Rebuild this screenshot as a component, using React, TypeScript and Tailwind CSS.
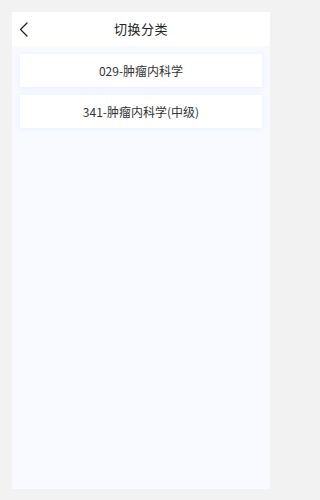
const items = ['029-肿瘤内科学', '341-肿瘤内科学(中级)'];

export default function App() {
  return (
    <div
      className="w-full min-h-screen bg-[#f2f2f2] pt-[12px] pl-[12px] pr-[11px] pb-[11px]"
      style={{ fontFamily: '"Noto Sans CJK SC", "Noto Sans", sans-serif' }}
    >
      <div className="flex flex-col h-[477px] w-[258px] bg-[#f8faff]">
        {/* Header */}
        <div className="relative flex items-center justify-center h-[34px] bg-white">
          <svg
            className="absolute left-[7px] top-[10px] w-[10px] h-[15px]"
            viewBox="0 0 10 15"
            fill="none"
            stroke="#222"
            strokeWidth={1.3}
            strokeLinecap="round"
            strokeLinejoin="round"
          >
            <polyline points="8,1 1.5,7.5 8,14" />
          </svg>
          <span className="text-[13px] font-normal text-[#222] tracking-[0.5px]">切换分类</span>
        </div>

        {/* List */}
        <div className="flex flex-col gap-[8px] px-[8px] pt-[8px]">
          {items.map((name) => (
            <div
              key={name}
              className="flex items-center justify-center h-[33px] bg-white shadow-[0_1px_6px_rgba(200,215,245,0.35)] text-[12px] text-[#333]"
            >
              {name}
            </div>
          ))}
        </div>
      </div>
    </div>
  );
}
